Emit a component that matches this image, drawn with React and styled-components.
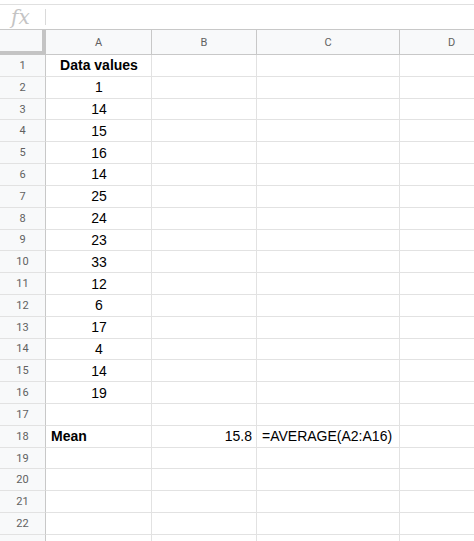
import React from "react";
import styled, { createGlobalStyle } from "styled-components";

const Global = createGlobalStyle`
  html, body { margin: 0; padding: 0; background: #fff; }
  body { font-family: "Liberation Sans", Arial, sans-serif; overflow: hidden; }
`;

const Page = styled.div`
  width: 474px;
  height: 541px;
  overflow: hidden;
  padding-top: 4px;
  box-sizing: border-box;
`;

const FormulaBar = styled.div`
  display: flex;
  align-items: center;
  height: 25px;
  border-top: 1px solid #e0e0e0;
  box-sizing: border-box;
`;

const FxLabel = styled.span`
  width: 46px;
  padding-left: 11px;
  box-sizing: border-box;
  font-family: "DejaVu Serif", "Liberation Serif", serif;
  font-style: italic;
  font-size: 20px;
  color: #c4c4c4;
  line-height: 1;
  display: flex;
  align-items: center;
  height: 100%;
  position: relative;
  &::after {
    content: "";
    position: absolute;
    right: 0;
    top: 4px;
    width: 1px;
    height: 16px;
    background: #dadada;
  }
`;

const Grid = styled.div`
  display: grid;
  grid-template-columns: 46px 106px 105px 143px 104px;
  grid-template-rows: 25px repeat(23, 21.82px);
  border-top: 1px solid #c8c8c8;
  width: 504px;
`;

const Corner = styled.div`
  background: #f8f9fa;
  border-right: 4px solid #c4c4c4;
  border-bottom: 4px solid #c4c4c4;
  box-sizing: border-box;
`;

const ColHead = styled.div`
  background: #f8f9fa;
  border-right: 1px solid #c8c8c8;
  border-bottom: 1px solid #c8c8c8;
  box-sizing: border-box;
  display: flex;
  align-items: center;
  justify-content: center;
  font-family: Roboto, "Liberation Sans", sans-serif;
  font-size: 11px;
  color: #616161;
`;

const RowHead = styled.div`
  background: #f8f9fa;
  border-right: 1px solid #c8c8c8;
  border-bottom: 1px solid #e2e2e2;
  box-sizing: border-box;
  display: flex;
  align-items: center;
  justify-content: center;
  font-family: Roboto, "Liberation Sans", sans-serif;
  font-size: 11px;
  color: #616161;
`;

const Cell = styled.div`
  border-right: 1px solid #e2e2e2;
  border-bottom: 1px solid #e2e2e2;
  box-sizing: border-box;
  display: flex;
  align-items: center;
  justify-content: ${(p) =>
    p.$align === "right" ? "flex-end" : p.$align === "center" ? "center" : "flex-start"};
  padding: 0 4px 0 5px;
  font-family: "Liberation Sans", Arial, sans-serif;
  font-size: 14px;
  font-weight: ${(p) => (p.$bold ? 700 : 400)};
  color: #000;
  white-space: nowrap;
  overflow: visible;
`;

const values = [1, 14, 15, 16, 14, 25, 24, 23, 33, 12, 6, 17, 4, 14, 19];

function rowCells(r) {
  if (r === 1) return [{ t: "Data values", a: "center", b: true }, {}, {}, {}];
  if (r >= 2 && r <= 16) return [{ t: String(values[r - 2]), a: "center" }, {}, {}, {}];
  if (r === 18)
    return [
      { t: "Mean", b: true },
      { t: "15.8", a: "right" },
      { t: "=AVERAGE(A2:A16)" },
      {},
    ];
  return [{}, {}, {}, {}];
}

export default function App() {
  const rows = Array.from({ length: 23 }, (_, i) => i + 1);
  return (
    <Page>
      <Global />
      <FormulaBar>
        <FxLabel>fx</FxLabel>
      </FormulaBar>
      <Grid>
        <Corner />
        {["A", "B", "C", "D"].map((c) => (
          <ColHead key={c}>{c}</ColHead>
        ))}
        {rows.map((r) => (
          <React.Fragment key={r}>
            <RowHead>{r <= 22 ? r : ""}</RowHead>
            {rowCells(r).map((c, i) => (
              <Cell key={i} $align={c.a} $bold={c.b}>
                {c.t}
              </Cell>
            ))}
          </React.Fragment>
        ))}
      </Grid>
    </Page>
  );
}
